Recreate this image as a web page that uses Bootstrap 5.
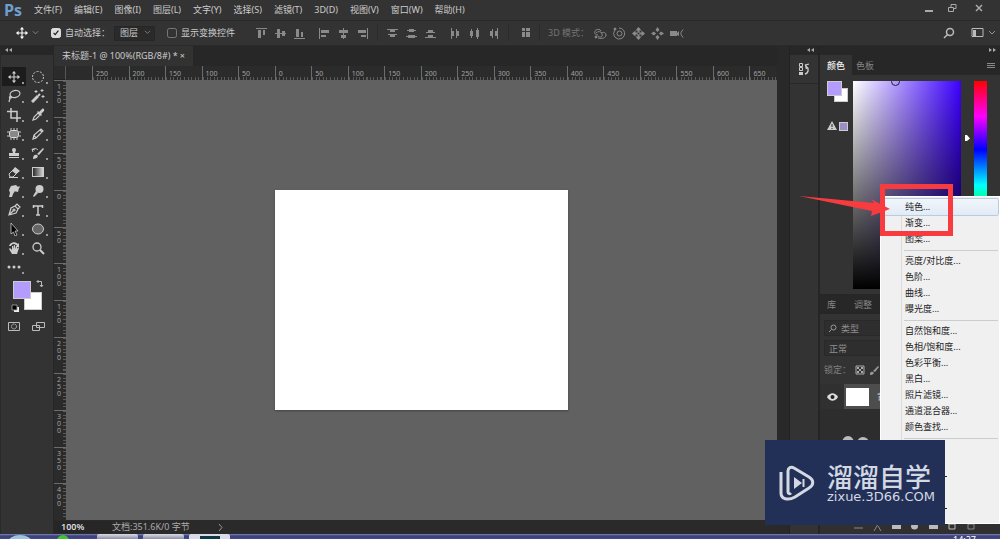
<!DOCTYPE html>
<html lang="zh-CN">
<head>
<meta charset="utf-8">
<meta name="viewport" content="width=device-width, initial-scale=1">
<title>未标题-1</title>
<link href="https://cdn.jsdelivr.net/npm/bootstrap@5.3.0/dist/css/bootstrap.min.css" rel="stylesheet">
<style>
:root{--bar:#333;--dark:#272727;--line:#262626;--ink:#ccc;--dim:#858585}
body{font:9px/12px "Noto Sans","Noto Sans CJK SC",sans-serif;color:var(--ink);background:var(--bar);overflow:hidden}
svg{display:block;flex:none}
a{color:inherit;text-decoration:none}
button{border:0;background:none;color:inherit;padding:0;font:inherit}
.app{min-height:100vh}
.menubar{height:21px;border-bottom:1px solid #2a2a2a}
.logo{font:bold 16px/18px "Open Sans",sans-serif;color:#6f9fd0;width:30px}
.menus{gap:12px}
.win{gap:13px;color:#aaa}
.options{height:25px;border-bottom:1px solid #2a2a2a;color:#8a8a8a}
.options label{color:var(--ink)}
.tick{width:10px;height:10px;margin:0 4px 0 0;border-radius:2px;border:1px solid #777;background-color:transparent;flex:none}
.tick:checked{background-color:#ddd;border-color:#ddd;background-image:url("data:image/svg+xml,%3Csvg xmlns='http://www.w3.org/2000/svg' viewBox='0 0 10 10'%3E%3Cpath d='M2 5l2 2 4-5' fill='none' stroke='%23222' stroke-width='1.6'/%3E%3C/svg%3E")}
.pick{width:41px;height:15px;font-size:9px;line-height:12px;padding:0 12px 0 5px;border:1px solid #262626;border-radius:0;background:#2a2a2a url("data:image/svg+xml,%3Csvg xmlns='http://www.w3.org/2000/svg' viewBox='0 0 8 6'%3E%3Cpath d='M1 1l3 3 3-3' fill='none' stroke='%23888'/%3E%3C/svg%3E") no-repeat right 3px center/7px;color:var(--ink)}
.transform-opt{gap:0;margin:0 20px 0 12px}
.icons{gap:6px}
.sep{width:1px;height:16px;background:#2b2b2b}
.tools{width:54px;border-right:1px solid var(--line);border-left:1px solid #2a2a2a}
.strip{height:9px;background:var(--dark);color:#aaa}
.toolgrid{display:grid;grid-template-columns:24px 24px;grid-auto-rows:19px;margin:12px 0 0 1px}
.toolgrid button,.modes button{display:grid;place-items:center;position:relative}
.toolgrid button.more::after{content:"";position:absolute;right:2px;bottom:2px;width:2px;height:2px;background:#999}
.toolgrid .on{background:#1c1c1c}
.swatches{position:relative;height:33px;margin:5px 8px 0 12px}
.fg,.bg2{position:absolute;width:18px;height:18px;border:1px solid #ccc}
.fg{left:0;top:0;background:#b49cff;z-index:1}
.bg2{left:11px;top:11px;background:#fff}
.swap{position:absolute;left:22px;top:-2px}.reset{position:absolute;left:-2px;top:23px}
.modes{margin:4px 0 0 1px;display:grid;grid-template-columns:24px 24px;height:18px}
.tabs{height:20px;background:var(--dark)}
.doctab{background:#323232;width:139px;padding-left:8px;line-height:20px}
.board{display:grid;grid-template:14px 1fr/12px 1fr;background:#2b2b2b;color:#a2a2a2;font-size:7px;line-height:8px}
.corner{border-right:1px solid #555;border-bottom:1px solid #222}
.rulerbox{overflow:hidden}
.ruler-x{display:grid;grid-template-columns:repeat(19,1fr);padding-left:26px;margin-right:-9px}
.ruler-x span{border-left:1px solid #6c6c6c;padding:4px 0 0 3px;height:14px;background:repeating-linear-gradient(90deg,#5a5a5a 0 1px,transparent 1px 10%) 0 100%/100% 3px no-repeat}
.ruler-y{display:grid;grid-template-rows:repeat(12,1fr)}
.ruler-y span{border-top:1px solid #6c6c6c;padding:2px 0 0 3px;line-height:7px;background:repeating-linear-gradient(180deg,#5a5a5a 0 1px,transparent 1px 10%) 100% 0/3px 100% no-repeat}
.ruler-y b{display:block;width:5px;font-weight:400;word-break:break-all}
.stage{background:#616161;overflow:hidden}
.paper{width:41.2%;aspect-ratio:4/3;background:#fff;box-shadow:0 1px 2px #444}
.status{height:14px;background:#2a2a2a;color:#aaa}
.zoomv{width:58px;padding-left:7px;background:#262626;color:#ddd;font-weight:600}
.gutter{width:12px;background:#292929}
.dock{width:31px;border-left:1px solid #222;border-right:2px solid #252525}
.dockbtn{height:29px;border-bottom:1px solid #282828;width:100%;display:grid;place-items:center}
.side{width:180px}
.ptabs{height:20px;background:var(--dark);color:var(--dim)}
.ptabs a{padding:0 7px;line-height:21px}
.ptabs .cur{background:var(--bar);color:#ddd;font-weight:600}
.picker{height:219px;padding:6px 13px 5px 7px}
.mini{width:26px}
.mini .fg{width:15px;height:15px}.mini .bg2{width:14px;height:14px;left:7px;top:7px}
.warn{margin-top:40px;gap:2px}
.warn i{width:9px;height:9px;border:1px solid #ccc;background:#9d8cc9}
.field{width:108px;background:linear-gradient(to top,#000,transparent),linear-gradient(to right,#fff,#3c00ff);position:relative;overflow:hidden}
.ring{position:absolute;left:38px;top:-4px;width:9px;height:9px;border:1px solid #223;border-radius:50%}
.hue{width:13px;background:linear-gradient(#f00,#f0f 17%,#00f 33%,#0ff 50%,#0f0 67%,#ff0 83%,#f00)}
.layers{padding:6px 4px 0}
.box2{height:16px;border:1px solid #292929;background:#2e2e2e;color:#8f8f8f;font-size:9px;line-height:12px;padding:0 4px;border-radius:0;width:100%}
.box2::placeholder{color:#8f8f8f}
.layer{height:25px;background:#4d4d4d}
.eye{width:24px;background:#303030;display:grid;place-items:center}
.thumb{width:23px;height:18px;background:#fff;margin-left:2px}
.below{background:#2d2d2d}
.foot{height:14px;background:#303030;padding:0 24px 0 34px;color:#aaa}
.adjust{position:absolute;right:0;top:196px;width:120px;min-width:0;padding:2px 1px;margin:0;border:1px solid #fff;border-radius:0;background:linear-gradient(90deg,transparent 20px,#dcdcdc 20px 21px,transparent 21px) #f0f0f0;font-size:9px;z-index:2;display:block}
.adjust .dropdown-item{padding:0 0 0 23px;font-size:9px;line-height:16px;height:16px;color:#222;border:0;border-radius:2px}
.adjust .hot{background:linear-gradient(#f1f5fa,#e2ebf5);box-shadow:0 0 0 1px #b5cce5}
.adjust .dropdown-item.tail{padding-left:63px}
.adjust .dropdown-divider{margin:3px 0 2px 22px;border-color:#ccc}
.tail::before{content:"";display:block;width:2px;height:1px;background:#222;transform:translateY(11px)}
.mark-box{position:absolute;right:47px;top:184px;width:73px;height:52px;border:5px solid #f83b3f;z-index:4}
.arrow{position:absolute;right:109px;top:194px;z-index:5}
.brand{position:absolute;right:55px;top:440px;width:180px;height:85px;background:#223057;color:#d3d8e3;z-index:6;gap:12px;padding-left:14px}
.brand strong{display:block;font:500 26px/28px "Noto Sans CJK SC",sans-serif;white-space:nowrap}
.brand span{display:block;font:13px/14px "DejaVu Sans",sans-serif;white-space:nowrap}
.taskbar{height:5px;background:linear-gradient(#8288b8,#3a3f7b 2px,#454a88);overflow:hidden;padding-left:7px}
.task{height:5px;width:41px;margin-left:5px;background:linear-gradient(#ddd,#8a8cb0);border-radius:2px 2px 0 0}
.task:first-of-type{margin-left:28px}
.task.open{background:#d9dbe8;padding-top:2px}
.task.open div{width:20px;height:3px;margin:0 auto;background:#0b3a44}
</style>
</head>
<body>
<svg width="0" height="0" class="position-absolute" aria-hidden="true">
<defs>
<symbol id="move" viewBox="0 0 14 14"><path d="M7 1v12M1 7h12" stroke="currentColor" stroke-width="1.3"/><path d="M7 0l2.5 3h-5zM7 14l2.5-3h-5zM0 7l3-2.5v5zM14 7l-3-2.5v5z" fill="currentColor"/></symbol>
<symbol id="down" viewBox="0 0 8 6"><path d="M1 1l3 3 3-3" fill="none" stroke="currentColor"/></symbol>
<symbol id="al1" viewBox="0 0 13 13"><path d="M1 1h11v1H1zM3 3h3v8H3zM8 3h2v5H8z" fill="currentColor"/></symbol>
<symbol id="al2" viewBox="0 0 13 13"><path d="M1 6h11v1H1zM3 2h3v9H3zM8 4h3v5H8z" fill="currentColor"/></symbol>
<symbol id="di1" viewBox="0 0 13 13"><path d="M1 2h11v1H1zM2 7h9v1H2zM4 3h5v2H4zM4 8h5v2H4z" fill="currentColor"/></symbol>
<symbol id="di2" viewBox="0 0 13 13"><path d="M2 3h9v1H2zM1 9h11v1H1zM4 2h5v3H4zM3 8h7v3H3z" fill="currentColor"/></symbol>
</defs>
</svg>
<div class="app d-flex flex-column position-relative">
<header class="menubar d-flex align-items-center ps-1">
<div class="logo">Ps</div>
<nav class="menus d-flex text-nowrap">
<a href="#">文件(F)</a><a href="#">编辑(E)</a><a href="#">图像(I)</a><a href="#">图层(L)</a><a href="#">文字(Y)</a><a href="#">选择(S)</a><a href="#">滤镜(T)</a><a href="#">3D(D)</a><a href="#">视图(V)</a><a href="#">窗口(W)</a><a href="#">帮助(H)</a>
</nav>
<div class="win d-flex ms-auto pe-3 pb-1">
<button aria-label="最小化"><svg width="10" height="10"><path d="M1 7h8v2H1z" fill="currentColor"/></svg></button>
<button aria-label="还原"><svg width="10" height="10" fill="none" stroke="currentColor"><path d="M4 4V1.500h5v4H6.500M1.500 4.500h5v4h-5z"/></svg></button>
<button class="ms-1" aria-label="关闭"><svg width="10" height="10"><path d="M2 2l6 6M8 2L2 8" stroke="currentColor" stroke-width="1.500"/></svg></button>
</div>
</header>

<div class="options d-flex align-items-center text-nowrap">
<svg class="ms-3 text-light" width="12" height="12"><use href="#move"/></svg>
<svg class="ms-1 me-2" width="7" height="6"><use href="#down"/></svg>
<input class="form-check-input tick ms-1" type="checkbox" id="auto" checked><label for="auto">自动选择：</label>
<select class="form-select pick ms-1" aria-label="自动选择"><option>图层</option></select>
<div class="transform-opt d-flex align-items-center"><input class="form-check-input tick" type="checkbox" id="tf"><label for="tf">显示变换控件</label></div>
<div class="icons d-flex">
<svg width="13" height="13"><use href="#al1"/></svg><svg width="13" height="13"><use href="#al2"/></svg><svg width="13" height="13"><use href="#al1" transform="matrix(1 0 0 -1 0 13)"/></svg>
</div>
<div class="icons d-flex ms-2 ps-1">
<svg width="13" height="13"><use href="#al1" transform="matrix(0 1 1 0 0 0)"/></svg><svg width="13" height="13"><use href="#al2" transform="matrix(0 1 1 0 0 0)"/></svg><svg width="13" height="13"><use href="#al1" transform="matrix(0 1 -1 0 13 0)"/></svg>
</div>
<div class="sep mx-2"></div>
<div class="icons d-flex">
<svg width="13" height="13"><use href="#di1"/></svg><svg width="13" height="13"><use href="#di2"/></svg><svg width="13" height="13"><use href="#di1" transform="matrix(1 0 0 -1 0 13)"/></svg>
</div>
<div class="icons d-flex ms-2 ps-1">
<svg width="13" height="13"><use href="#di1" transform="matrix(0 1 1 0 0 0)"/></svg><svg width="13" height="13"><use href="#di2" transform="matrix(0 1 1 0 0 0)"/></svg><svg width="13" height="13"><use href="#di1" transform="matrix(0 1 -1 0 13 0)"/></svg>
</div>
<div class="sep mx-2"></div>
<svg class="ms-1" width="10" height="12"><path d="M1 1h3v3H1zM5 1h4v3H5zM1 5h3v5H1zM5 5h4v5H5z" fill="currentColor"/></svg>
<div class="sep mx-2"></div>
<span class="me-1 opacity-75">3D 模式：</span>
<div class="icons d-flex">
<svg width="14" height="13" fill="none" stroke="currentColor"><path d="M5 8C1 8 1 4 3 3s4-1 5 1M5 11c4 1 8 0 8-3s-3-3-5-2M3 6c2-2 5-2 6 1s-2 4-4 2"/><circle cx="3" cy="10" r="1" fill="currentColor"/></svg>
<svg width="13" height="13" fill="none" stroke="currentColor"><path d="M3 2a5.500 5.500 0 1 0 3-1"/><circle cx="6.500" cy="6.500" r="2.500"/><circle cx="2" cy="2" r="1" fill="currentColor"/></svg>
<svg width="13" height="13"><path d="M6.500 1v11M1 6.500h11" stroke="currentColor" stroke-width="2"/><path d="M6.500 0l3 3.500h-6zM6.500 13l3-3.500h-6zM0 6.500l3.500-3v6zM13 6.500l-3.500-3v6z" fill="currentColor"/><circle cx="6.500" cy="6.500" r="1" fill="#333"/></svg>
<svg width="13" height="13"><path d="M6.500 0l2 3-2 2-2-2zM6.500 13l2-3-2-2-2 2zM0 6.500l3-2 2 2-2 2zM13 6.500l-3-2-2 2 2 2z" fill="currentColor"/></svg>
<svg width="14" height="13"><path d="M0 4h7v5H0zM7 6l2-2v5L7 8z" fill="currentColor"/><path d="M13 2.500l-2 3v2l2 3" fill="none" stroke="currentColor"/></svg>
</div>
<div class="d-flex align-items-center ms-auto me-1 text-light">
<svg width="12" height="12"><g fill="none" stroke="#bbb" stroke-width="1.500"><circle cx="7" cy="5" r="3.500"/><path d="M4.500 7.500L1 11"/></g></svg>
<svg class="ms-3" width="13" height="12"><path d="M1 1.500h11v8H1z" fill="none" stroke="#bbb"/><path d="M2 3h3v6H2z" fill="#bbb"/></svg>
<svg class="ms-1 opacity-50" width="8" height="6"><use href="#down"/></svg>
</div>
</div>

<main class="d-flex flex-grow-1">
<aside class="tools flex-shrink-0">
<div class="strip ps-1"><svg width="7" height="7"><path d="M3 2v4L0 4zM7 2v4L4 4z" fill="#aaa"/></svg></div>
<div class="toolgrid">
<button class="on more" aria-label="移动"><svg width="12" height="12"><use href="#move"/></svg></button>
<button class="more" aria-label="椭圆选框"><svg width="14" height="14"><circle cx="7" cy="7" r="5.500" fill="none" stroke="#ccc" stroke-dasharray="2 1.400"/></svg></button>
<button class="more" aria-label="套索"><svg width="14" height="14" fill="none" stroke="#ccc" stroke-width="1.200"><ellipse cx="8" cy="5" rx="5" ry="3.500" transform="rotate(-12 8 5)"/><path d="M4 7c-3 1-1 3 0 2s0-2-1-1M3 9l-1 4"/></svg></button>
<button class="more" aria-label="魔棒"><svg width="14" height="14" stroke="#ccc" fill="none"><path d="M1 13l6-6" stroke-width="3"/><path d="M7 7l2-2" stroke-width="2"/><path d="M5 1v3M3.500 2.500h3M11 0v3M9.500 1.500h3M12 6v3M10.500 7.500h3"/></svg></button>
<button class="more" aria-label="裁剪"><svg width="14" height="14" stroke="#ccc" fill="none" stroke-width="1.500"><path d="M4 0v10h10M0 3.500h10V14"/></svg></button>
<button class="more" aria-label="吸管"><svg width="14" height="14"><path d="M2 12l1-3 4-4 2 2-4 4z" fill="none" stroke="#ccc" stroke-width="1.200"/><path d="M6 4l4 4 1-1-1-1 3-3c1-2-1-3-2-2L8 4 7 3z" fill="#ccc"/></svg></button>
<button class="more" aria-label="修补"><svg width="14" height="14"><rect x="2.500" y="3.500" width="9" height="7" rx="2" fill="#888" stroke="#ddd"/><path d="M4 1v2M7 1v2M10 1v2M4 11v2M7 11v2M10 11v2M0 5h2M0 9h2M12 5h2M12 9h2" stroke="#ccc"/></svg></button>
<button class="more" aria-label="铅笔"><svg width="14" height="14" fill="none" stroke="#ccc" stroke-width="1.200"><path d="M2 12l1-4 7-6 2 2-7 7zM3 8l2 3M9 3l2 2"/></svg></button>
<button class="more" aria-label="图章"><svg width="14" height="14" fill="#ccc"><path d="M5 4a2 2 0 1 1 4 0L8 7h4v3H2V7h4zM2 11h10v1H2z"/></svg></button>
<button class="more" aria-label="历史画笔"><svg width="14" height="14"><path d="M2 13c0-4 2-5 4-4s0 4-4 4zM6 8l6-6 1 1-5 6z" fill="#ccc"/><path d="M1 4c2-2 4-2 6 0M2 6l-1-3 3 1" stroke="#ccc" fill="none"/></svg></button>
<button class="more" aria-label="橡皮擦"><svg width="14" height="14"><path d="M2 9l6-6 4 3-6 6H3z" fill="none" stroke="#ccc"/><path d="M5 6l4 3 4-3-5-4zM2 12h9v1H2z" fill="#ccc"/></svg></button>
<button class="more" aria-label="渐变"><svg width="14" height="14"><defs><linearGradient id="gr"><stop stop-color="#222"/><stop offset="1" stop-color="#ddd"/></linearGradient></defs><rect x="1.500" y="2.500" width="11" height="9" fill="url(#gr)" stroke="#ccc"/></svg></button>
<button class="more" aria-label="涂抹"><svg width="14" height="14" fill="#ccc"><path d="M2 13l1-4-1-3 2-4 5-1 3 3-1 4-3-1-2 3-1 3zM12 2l1 1-4 5-1-1z"/></svg></button>
<button class="more" aria-label="减淡"><svg width="14" height="14" fill="#ccc"><circle cx="8.500" cy="5" r="4"/><path d="M5 7l2 2-4 4-1-1z"/></svg></button>
<button class="more" aria-label="钢笔"><svg width="14" height="14" fill="none" stroke="#ccc" stroke-width="1.200"><path d="M2 12l2-7 4-2 3 3-2 4zM2 12l4-4M8 3l2-2 3 3-2 2"/><circle cx="7" cy="7" r="1"/></svg></button>
<button class="more" aria-label="文字"><svg width="14" height="14"><path d="M2 3h10M7 3v9M5 12h4M2.500 2v3M11.500 2v3" stroke="#ccc" stroke-width="1.500"/></svg></button>
<button class="more" aria-label="路径选择"><svg width="14" height="14"><path d="M4 1l7 8H8l2 4-2 1-1.500-4L4 12z" fill="#000" stroke="#ccc" stroke-width=".8"/></svg></button>
<button class="more" aria-label="椭圆"><svg width="14" height="14"><ellipse cx="7" cy="7" rx="5.500" ry="5" fill="#666" stroke="#ccc"/></svg></button>
<button class="more" aria-label="抓手"><svg width="14" height="14" fill="#ccc"><path d="M3 7l2 2V5h1v3l1-4h1v4l1-3h1v3l1-2 1 1-2 6H5L2 8z"/><path d="M2 5c1-4 6-5 9-2l1-1v4H9l1-1C7 2 5 3 4 5z"/></svg></button>
<button aria-label="缩放"><svg width="14" height="14" fill="none" stroke="#ccc"><circle cx="6" cy="6" r="4" stroke-width="1.300"/><path d="M9 9l4 4" stroke-width="2"/></svg></button>
<button class="more" aria-label="更多"><svg width="14" height="14" fill="#ccc"><circle cx="2" cy="7" r="1.500"/><circle cx="7" cy="7" r="1.500"/><circle cx="12" cy="7" r="1.500"/></svg></button>
</div>
<div class="swatches"><div class="fg"></div><div class="bg2"></div>
<svg class="swap" width="9" height="9" fill="none" stroke="#bbb"><path d="M2 2.500h4.500V7M3.500 1L2 2.500 3.500 4M5 6l1.500 2L8 6"/></svg>
<svg class="reset" width="9" height="9"><path d="M3 3h5v5H3z" fill="#eee"/><path d="M1 1h5v5H1z" fill="#000" stroke="#aaa" stroke-width=".8"/></svg></div>
<div class="modes"><button aria-label="快速蒙版"><svg width="14" height="12" fill="none" stroke="#bbb"><path d="M1.500 1.500h11v8h-11z"/><circle cx="7" cy="5.500" r="2.500" stroke-dasharray="1.500 .5"/></svg></button><button aria-label="屏幕模式"><svg width="14" height="12" fill="#333" stroke="#bbb"><path d="M1.500 4.500h7v5h-7zM5.500 1.500h8v5h-8z"/></svg></button></div>
</aside>

<section class="d-flex flex-column flex-grow-1">
<div class="tabs"><div class="doctab d-flex text-nowrap"><span>未标题-1 @ 100%(RGB/8#) *</span><button class="ms-auto me-2" aria-label="关闭文档">×</button></div></div>
<div class="board flex-grow-1">
<div class="corner"></div>
<div class="rulerbox"><div class="ruler-x" id="rx"></div></div>
<div class="ruler-y" id="ry"></div>
<div class="stage d-flex align-items-center justify-content-center"><div class="paper"></div></div>
</div>
<div class="status d-flex align-items-center"><div class="zoomv">100%</div><span>文档:351.6K/0 字节</span><svg class="ms-4 ps-1" width="9" height="9"><path d="M1 1l3 3.500L1 8" fill="none" stroke="#999"/></svg></div>
</section>
<div class="gutter flex-shrink-0"></div>
<aside class="dock flex-shrink-0"><div class="strip d-flex justify-content-end pe-1"><svg width="7" height="7"><path d="M3 2v4L0 4zM7 2v4L4 4z" fill="#aaa"/></svg></div>
<button class="dockbtn" aria-label="历史记录"><svg width="14" height="14" fill="none" stroke="#ccc"><path d="M2.500 1.500h3v3h-3zM2.500 5.500h3v3h-3z"/><path d="M2 10h4v3H2z" fill="#ccc" stroke="none"/><path d="M8 12c4-1 4-6 1-8M12 2L8.500 3l1 4" stroke-width="1.300"/></svg></button></aside>
<aside class="side d-flex flex-column flex-shrink-0">
<div class="strip d-flex justify-content-end pe-1"><svg width="7" height="7"><path d="M0 2v4l3-2zM4 2v4l3-2z" fill="#aaa"/></svg></div>
<nav class="ptabs d-flex"><a class="cur" href="#">颜色</a><a class="ps-1" href="#">色板</a><svg class="ms-auto mt-2 me-1" width="10" height="8"><path d="M1 0.500h8M1 2.500h8M1 4.500h8" stroke="#888"/></svg></nav>
<div class="picker d-flex">
<div class="mini"><div class="position-relative"><div class="fg"></div><div class="bg2"></div></div><div class="warn d-flex align-items-center"><svg width="10" height="10"><path d="M5 0l5 9H0z" fill="#ccc"/><path d="M5 3v3M5 7v1" stroke="#222"/></svg><i></i></div></div>
<div class="field"><div class="ring"></div></div>
<svg class="ms-auto align-self-start" width="6" height="62"><path d="M1 54h2l3 3.500L3 60H1z" fill="#fff"/></svg>
<div class="hue ms-1"></div>
</div>
<nav class="ptabs d-flex"><a href="#">库</a><a class="ms-1" href="#">调整</a></nav>
<div class="layers">
<div class="position-relative"><svg class="position-absolute top-0 ms-1 mt-1" width="9" height="9" fill="none" stroke="#999"><circle cx="5.500" cy="3.500" r="2.500"/><path d="M3.500 5.500L1 8"/></svg><input class="box2 ps-3" type="text" placeholder="类型" aria-label="类型"></div>
<input class="box2 mt-1" type="text" value="正常" aria-label="混合模式">
<div class="d-flex align-items-center mt-1 py-1"><span class="opacity-50">锁定：</span><svg class="ms-1" width="10" height="10"><path d="M1 1h8v8H1z" fill="none" stroke="#aaa"/><path d="M2 2h2v2H2zM6 2h2v2H6zM4 4h2v2H4zM2 6h2v2H2zM6 6h2v2H6z" fill="#aaa"/></svg><svg class="ms-1" width="11" height="11"><path d="M1 10c0-3 1-4 3-3s0 3-3 3zM4 6l5-5 1 1-4 5z" fill="#999"/></svg></div>
</div>
<div class="layer d-flex align-items-center mt-1"><div class="eye h-100"><svg width="11" height="8"><path d="M0 4c3-5 8-5 11 0-3 5-8 5-11 0z" fill="#ddd"/><circle cx="5.500" cy="4" r="2" fill="#222"/></svg></div><div class="thumb"></div><span class="ms-2">背景</span></div>
<div class="below flex-grow-1"><svg width="60" height="50"><ellipse cx="28" cy="34" rx="6" ry="7" fill="#bbb"/><ellipse cx="43" cy="34" rx="6" ry="6" fill="#bbb"/></svg></div>
<div class="foot d-flex justify-content-between align-items-center"><svg width="9" height="9"><path d="M0 5h9" stroke="#888"/></svg><svg width="9" height="9"><path d="M1 8l4-7M5 3l3 5" stroke="#888"/></svg><svg width="9" height="9"><path d="M0 1h9v5H0z" fill="#bbb"/></svg><svg width="9" height="9"><circle cx="4.500" cy="3" r="3.500" fill="#bbb"/></svg><svg width="9" height="9"><path d="M0 1h9v5H0z" fill="#bbb"/></svg><svg width="9" height="9"><path d="M1 1h6v5H1z" fill="none" stroke="#bbb"/></svg><svg width="9" height="9"><path d="M1 1h6v5H1z" fill="none" stroke="#888"/></svg></div>
</aside>
</main>

<footer class="taskbar d-flex">
<svg width="26" height="5"><ellipse cx="13" cy="9" rx="12" ry="8" fill="#9fc3dd"/></svg>
<svg class="ms-4" width="12" height="5"><circle cx="6" cy="7" r="6" fill="#41c52f"/></svg>
<div class="task"></div><div class="task"></div><div class="task open"><div></div></div>
<span class="ms-auto me-4 text-white">14:27</span>
</footer>

<ul class="dropdown-menu adjust">
<li><button class="dropdown-item hot">纯色...</button></li><li><button class="dropdown-item">渐变...</button></li><li><button class="dropdown-item">图案...</button></li>
<li><hr class="dropdown-divider"></li>
<li><button class="dropdown-item">亮度/对比度...</button></li><li><button class="dropdown-item">色阶...</button></li><li><button class="dropdown-item">曲线...</button></li><li><button class="dropdown-item">曝光度...</button></li>
<li><hr class="dropdown-divider"></li>
<li><button class="dropdown-item">自然饱和度...</button></li><li><button class="dropdown-item">色相/饱和度...</button></li><li><button class="dropdown-item">色彩平衡...</button></li><li><button class="dropdown-item">黑白...</button></li><li><button class="dropdown-item">照片滤镜...</button></li><li><button class="dropdown-item">通道混合器...</button></li><li><button class="dropdown-item">颜色查找...</button></li>
<li><hr class="dropdown-divider"></li>
<li><button class="dropdown-item" aria-label="反相"></button></li><li><button class="dropdown-item tail" aria-label="色调分离"></button></li><li><button class="dropdown-item" aria-label="阈值"></button></li><li><button class="dropdown-item tail" aria-label="渐变映射"></button></li><li><button class="dropdown-item tail" aria-label="可选颜色"></button></li>
</ul>
<div class="mark-box"></div>
<svg class="arrow" width="92" height="24"><path d="M0 2l75 7-3-4 19 10-19 7 1-5z" fill="#f83b3f"/></svg>
<div class="brand d-flex align-items-center"><svg width="36" height="38" fill="none" stroke="#d3d8e3" stroke-width="3"><path d="M9 28V7c0-3 3-5 6-3l15 9c5 3 5 8 0 11L16 33C9 37 2 35 2 29V8"/><path d="M9 28c0 2 2 2 3 1"/><path d="M15 13v12l8-6z" fill="#d3d8e3" stroke="none"/><path d="M24.500 15v8" stroke-width="2"/></svg><div><strong>溜溜自学</strong><span>zixue.3D66.COM</span></div></div>
</div>
<script src="https://cdn.jsdelivr.net/npm/bootstrap@5.3.0/dist/js/bootstrap.bundle.min.js"></script>
<script>
/* ruler labels, counted every 50 units from the artboard origin */
for (let v = -250; v <= 650; v += 50) rx.insertAdjacentHTML('beforeend', `<span>${Math.abs(v)}</span>`);
for (let v = -150; v <= 400; v += 50) ry.insertAdjacentHTML('beforeend', `<span><b>${Math.abs(v)}</b></span>`);
</script>
</body>
</html>
